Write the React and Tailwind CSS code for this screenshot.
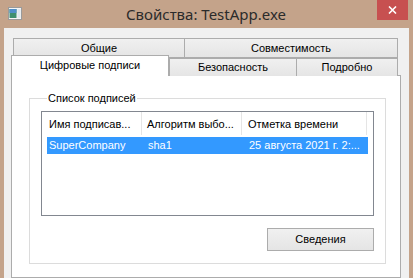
import React from "react";

const f = { fontFamily: '"Liberation Sans", Arial, sans-serif' };

function Tab({ w, h, children, extra = "" }) {
  return (
    <div
      className={`flex items-center justify-center border border-[#acacac] bg-gradient-to-b from-[#f0f0f0] to-[#e5e5e5] text-[11px] text-black ${extra}`}
      style={{ width: w, height: h }}
    >
      {children}
    </div>
  );
}

export default function App() {
  return (
    <div className="w-[413px] h-[278px] overflow-hidden bg-[#c4a38a] flex flex-col" style={f}>
      {/* Title bar */}
      <div className="h-[28px] flex relative shrink-0">
        <div className="pt-[7px] pl-[8px]">
          <svg width="14" height="13" viewBox="0 0 14 13">
            <rect x="0.5" y="0.5" width="13" height="12" fill="#f4f4f4" stroke="#9a9a9a" />
            <rect x="1.5" y="2" width="7" height="9" fill="#3e8f6e" />
            <rect x="1.5" y="2" width="7" height="4" fill="#4f8fc8" />
            <rect x="9.5" y="2" width="3" height="9" fill="#dfe8ee" />
          </svg>
        </div>
        <div
          className="flex-1 text-center text-[15px] leading-[28px] text-[#2b2b2b] pl-[13px]"
          style={{ fontFamily: '"Noto Sans", "Open Sans", sans-serif' }}
        >
          Свойства: TestApp.exe
        </div>
        <div className="w-[31px] h-[20px] mr-[5px] bg-[#c75050] flex items-center justify-center">
          <svg width="9" height="8" viewBox="0 0 9 8">
            <path d="M1 0.5 L8 7.5 M8 0.5 L1 7.5" stroke="#fff" strokeWidth="1.6" />
          </svg>
        </div>
      </div>

      {/* Client area */}
      <div className="flex-1 mx-[4px] bg-[#f0f0f0] pl-[7px] pr-[8px] pt-[10px] flex flex-col">
        {/* Tab row 1 */}
        <div className="flex ml-[2px]">
          <Tab w={172} h={20}>Общие</Tab>
          <Tab w={214} h={20} extra="-ml-px">Совместимость</Tab>
        </div>
        {/* Tab row 2 */}
        <div className="flex items-end h-[20px] -mt-[3px] relative z-10">
          <div className="w-[158px] h-[21px] mb-[-1px] bg-white border-l border-t border-r border-[#acacac] flex items-center justify-center text-[11px] text-black pb-[2px]">
            Цифровые подписи
          </div>
          <Tab w={128} h={18} extra="-mb-px border-b-0">Безопасность</Tab>
          <Tab w={102} h={18} extra="-ml-px -mb-px border-b-0">Подробно</Tab>
        </div>
        {/* Tab page */}
        <div className="flex-1 bg-white border border-[#acacac] pl-[17px] pr-[14px] pt-[16px]">
          <fieldset className="border border-[#dcdcdc] h-[172px] px-[11px] pb-[12px] flex flex-col">
            <legend className="ml-[6px] px-[1px] text-[11px] text-black leading-[13px]">
              Список подписей
            </legend>
            <div className="mt-[6px] h-[106px] border border-[#828790] bg-white flex flex-col">
              <div className="h-[23px] flex text-[11px] text-black">
                <div className="w-[100px] border-r border-[#e5e5e5] flex items-center pl-[7px] pt-[2px]">
                  Имя подписав...
                </div>
                <div className="w-[100px] border-r border-[#e5e5e5] flex items-center pl-[5px] pt-[2px]">
                  Алгоритм выбо...
                </div>
                <div className="w-[125px] border-r border-[#e5e5e5] flex items-center pl-[6px] pt-[2px]">
                  Отметка времени
                </div>
              </div>
              <div className="mt-[2px] ml-[5px] w-[321px] h-[17px] bg-[#3399ff] flex text-[11px] text-white items-center">
                <div className="w-[95px] pl-[2px]">SuperCompany</div>
                <div className="w-[100px] pl-[6px]">sha1</div>
                <div className="pl-[7px]">25 августа 2021 г. 2:...</div>
              </div>
            </div>
            <div className="flex justify-end mt-[12px]">
              <div className="w-[107px] h-[23px] border border-[#acacac] bg-gradient-to-b from-[#f0f0f0] to-[#e5e5e5] flex items-center justify-center text-[11px] text-black">
                Сведения
              </div>
            </div>
          </fieldset>
        </div>
      </div>
    </div>
  );
}
